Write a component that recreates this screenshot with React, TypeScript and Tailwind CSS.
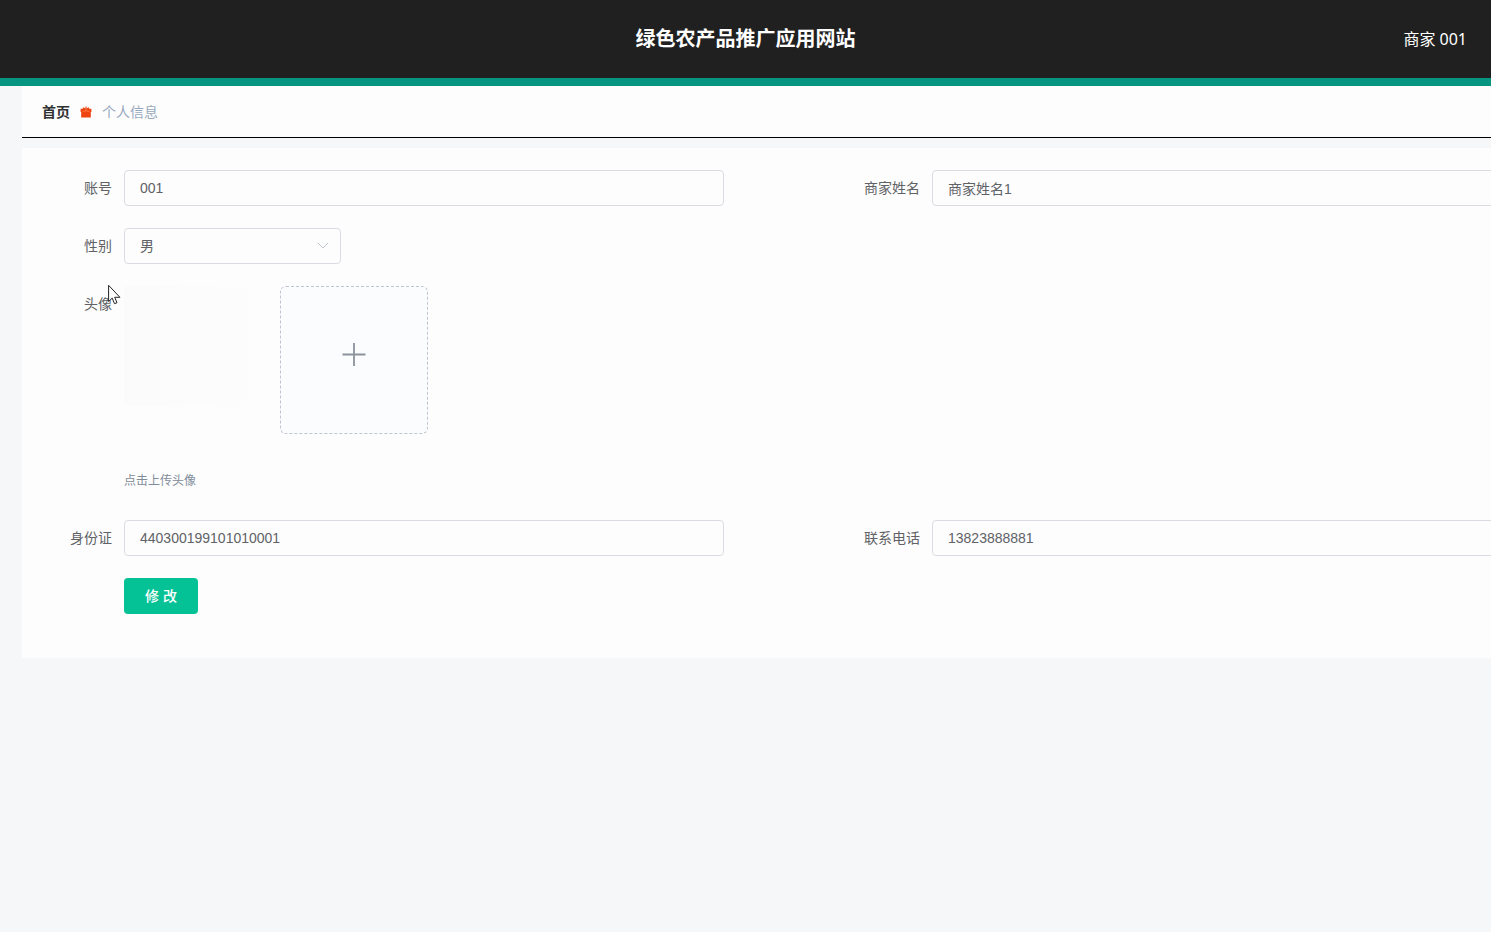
import { useState, type ReactNode } from 'react'

interface FieldProps {
  id: string
  label: string
  children: ReactNode
}

const inputClass =
  'h-9 w-[600px] rounded border border-[#d9dce3] bg-[#fdfdfe] px-[15px] text-sm text-[#606266] outline-none focus:border-[#00c292]'

function Field({ id, label, children }: FieldProps) {
  return (
    <div className="flex shrink-0 items-start">
      <label htmlFor={id} className="w-20 shrink-0 pr-3 text-right text-sm leading-9 text-[#606266]">
        {label}
      </label>
      {children}
    </div>
  )
}

function GiftIcon() {
  return (
    <svg width="12" height="12" viewBox="0 0 12 12" aria-hidden="true">
      <path d="M.6 2.8h2.6l-.5-.9.9-.6 1.6 1.3L5.6.6h.8l.4 2 1.6-1.3.9.6-.5.9h2.6v3.1h-.6v5.7H1.2V5.9H.6z" fill="#ee4411" />
      <path d="M2.6 5.6L6 4.8l3.4.8M6 2.2v2.6" fill="none" stroke="#ff8a50" strokeWidth=".7" />
    </svg>
  )
}

function Cursor() {
  return (
    <svg className="pointer-events-none absolute top-[284px] left-[108px]" width="13" height="21" viewBox="0 0 13 21" aria-hidden="true">
      <path d="M.6 1.3v16.2l3.6-3.4 2.3 5.6 2.5-1-2.3-5.4h5.2z" fill="#fff" stroke="#222" strokeWidth="1" />
    </svg>
  )
}

export default function App() {
  const [form, setForm] = useState({
    account: '001',
    name: '商家姓名1',
    gender: '男',
    idCard: '440300199101010001',
    phone: '13823888881',
  })

  const update = (key: string, value: string) => setForm({ ...form, [key]: value })

  return (
    <div className="relative min-h-screen overflow-hidden bg-[#f5f7f9] font-['Liberation_Sans','Noto_Sans_CJK_SC',sans-serif]">
      <header className="grid h-[86px] grid-cols-[1fr_auto_1fr] items-center border-b-8 border-[#069580] bg-[#202020] px-6 text-white">
        <h1 className="col-start-2 text-xl font-bold">绿色农产品推广应用网站</h1>
        <span className="justify-self-end font-['Noto_Sans','Noto_Sans_CJK_SC',sans-serif] text-base leading-5">商家 001</span>
      </header>

      <main className="pl-[22px]">
        <nav className="flex h-[52px] items-center gap-[10px] border-b border-black bg-[#fdfdfd] px-5 pt-px text-sm">
          <a href="#" className="font-bold text-[#303133]">首页</a>
          <GiftIcon />
          <span className="text-[#97a8be]">个人信息</span>
        </nav>

        <form
          className="mt-[10px] flex flex-col gap-[22px] overflow-hidden bg-[#fdfdfd] px-[22px] pt-[22px] pb-11"
          onSubmit={(e) => e.preventDefault()}
        >
          <div className="flex gap-32">
            <Field id="account" label="账号">
              <input id="account" className={inputClass} value={form.account} onChange={(e) => update('account', e.target.value)} />
            </Field>
            <Field id="name" label="商家姓名">
              <input id="name" className={inputClass} value={form.name} onChange={(e) => update('name', e.target.value)} />
            </Field>
          </div>

          <Field id="gender" label="性别">
            <div className="relative">
              <select
                id="gender"
                className="h-9 w-[217px] appearance-none rounded border border-[#d9dce3] bg-[#fdfdfe] px-[15px] text-sm text-[#606266] outline-none"
                value={form.gender}
                onChange={(e) => update('gender', e.target.value)}
              >
                <option>男</option>
                <option>女</option>
              </select>
              <svg className="pointer-events-none absolute top-3 right-3" width="12" height="12" viewBox="0 0 12 12" fill="none" stroke="#c0c4cc" aria-hidden="true">
                <path d="M1 3l5 5 5-5" />
              </svg>
            </div>
          </Field>

          <Field id="avatar" label="头像">
            <div>
              <div className="flex gap-2">
                {/* uploaded avatar, almost blank while it fades in */}
                <div className="h-[120px] w-[148px] bg-linear-to-r from-[#fbfbfb] to-[#fdfdfd]" />
                <button
                  id="avatar"
                  type="button"
                  aria-label="上传头像"
                  className="flex size-[148px] items-center justify-center rounded-md border border-dashed border-[#c0c4d0] bg-[#fbfcfe] pb-3"
                >
                  <svg width="24" height="24" viewBox="0 0 24 24" fill="none" stroke="#8c939d" strokeWidth="1.8" aria-hidden="true">
                    <path d="M12 1v23M.5 12.5h23" />
                  </svg>
                </button>
              </div>
              <p className="mt-[38px] mb-2 text-xs leading-[18px] text-[#7f8c99]">点击上传头像</p>
            </div>
          </Field>

          <div className="flex gap-32">
            <Field id="idCard" label="身份证">
              <input id="idCard" className={inputClass} value={form.idCard} onChange={(e) => update('idCard', e.target.value)} />
            </Field>
            <Field id="phone" label="联系电话">
              <input id="phone" className={inputClass} value={form.phone} onChange={(e) => update('phone', e.target.value)} />
            </Field>
          </div>

          <button type="submit" className="ml-20 h-9 w-[74px] rounded bg-[#05c296] text-sm font-medium text-white">
            修 改
          </button>
        </form>
      </main>

      <Cursor />
    </div>
  )
}
